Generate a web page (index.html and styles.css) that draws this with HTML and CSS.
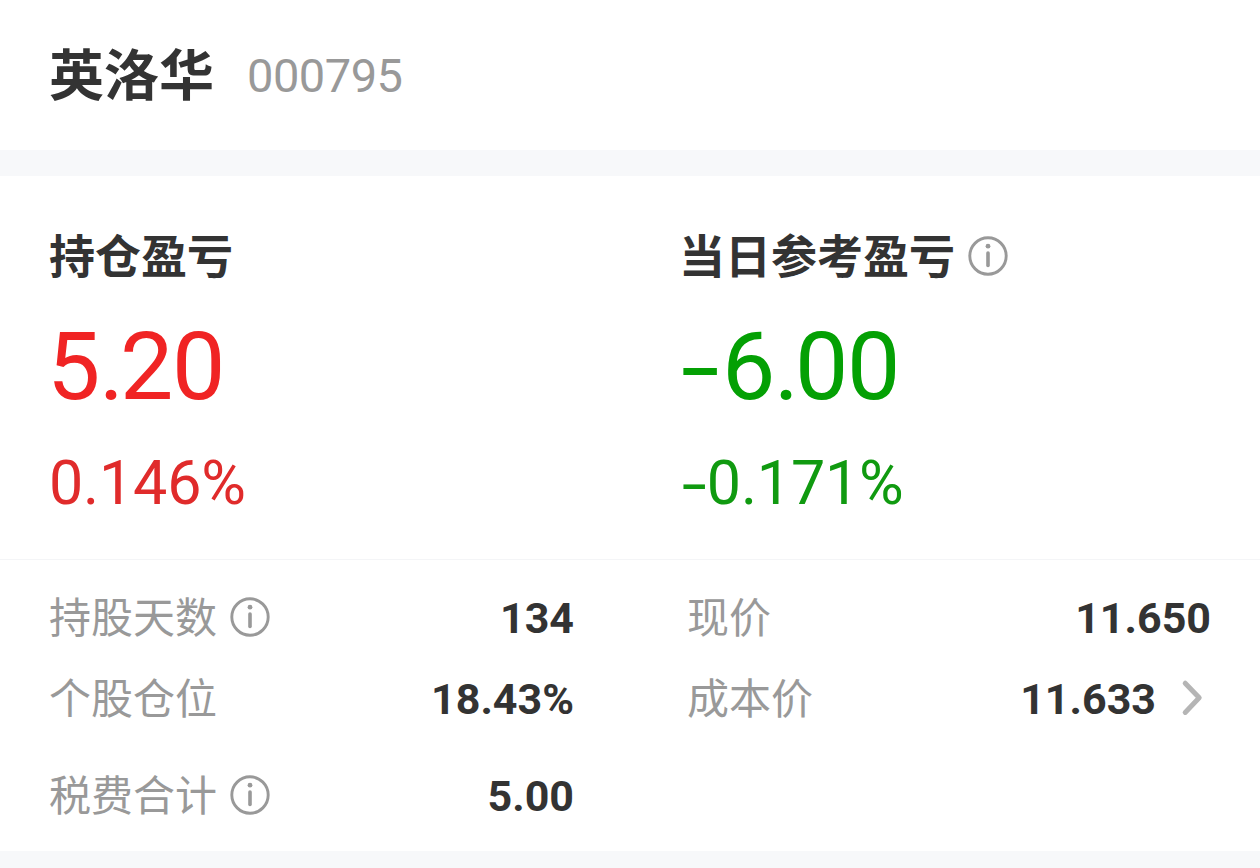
FILE: index.html
```html
<!DOCTYPE html>
<html lang="zh-CN">
<head>
<meta charset="UTF-8">
<title>英洛华 000795</title>
<link rel="stylesheet" href="styles.css">
</head>
<body>
<header class="stock"><h1 class="stock-name">英洛华</h1><span class="stock-code">000795</span></header>
<main class="card">
<section class="summary">
<div class="profit up">
<h2 class="profit-title"><span class="title-text">持仓盈亏</span></h2>
<div class="amount">5<span class="point">.</span>20</div>
<div class="percent">0.146%</div>
</div>
<div class="profit down">
<h2 class="profit-title"><span class="title-text">当日参考盈亏</span><svg class="info" viewBox="0 0 40 40"><circle cx="20" cy="20" r="18.2"/><path d="M20 17v12.5"/><circle class="dot" cx="20" cy="10.2" r="2.4"/></svg></h2>
<div class="amount"><span class="minus">–</span>6<span class="point">.</span>00</div>
<div class="percent"><span class="minus">–</span>0.171%</div>
</div>
</section>
<section class="details">
<div class="row"><span class="label">持股天数</span><svg class="info" viewBox="0 0 40 40"><circle cx="20" cy="20" r="18.2"/><path d="M20 17v12.5"/><circle class="dot" cx="20" cy="10.2" r="2.4"/></svg><span class="value">134</span></div>
<div class="row right"><span class="label">现价</span><span class="value">11.650</span></div>
<div class="row"><span class="label">个股仓位</span><span class="value">18.43%</span></div>
<div class="row right"><span class="label">成本价</span><span class="value">11.633</span><svg class="chevron" viewBox="0 0 24 38"><path d="M5.2 4.2L19.2 18.8L5.2 33.4"/></svg></div>
<div class="row"><span class="label">税费合计</span><svg class="info" viewBox="0 0 40 40"><circle cx="20" cy="20" r="18.2"/><path d="M20 17v12.5"/><circle class="dot" cx="20" cy="10.2" r="2.4"/></svg><span class="value">5.00</span></div>
</section>
</main>
</body>
</html>
```
FILE: styles.css
```css
* { box-sizing: border-box; }
body { margin: 0; height: 868px; overflow: hidden; background: #f7f8fa; color: #333; font-family: "Noto Sans CJK SC", sans-serif; }
h1, h2 { margin: 0; }
.stock { height: 150px; padding-left: 49px; display: flex; align-items: center; background: #fff; }
.stock-name { font-size: 55px; line-height: 80px; font-weight: 700; width: 198px; padding-bottom: 8px; }
.stock-code, .amount, .percent, .value { font-family: Roboto, "Noto Sans CJK SC", sans-serif; }
.stock-code { font-size: 47px; line-height: 80px; letter-spacing: -0.5px; color: #999; padding-top: 2px; }
.card { margin-top: 26px; height: 675px; background: #fff; }
.summary { height: 384px; display: grid; grid-template-columns: 631px 1fr; border-bottom: 1px solid #f4f5f7; padding: 50px 0 0 49px; }
.profit-title { height: 60px; display: flex; align-items: center; gap: 13px; font-size: 46px; line-height: 60px; }
.title-text { padding-bottom: 7px; }
.down .title-text { margin-left: -1px; }
.amount { height: 130px; margin: 16px 0 0 -2px; font-size: 95px; line-height: 130px; letter-spacing: -1.4px; white-space: nowrap; }
.amount .point { letter-spacing: -4px; }
.percent { height: 80px; margin-top: 11px; font-size: 61px; line-height: 80px; letter-spacing: -0.2px; white-space: nowrap; }
.minus { display: inline-block; transform: translateY(0.06em) scaleX(0.72); transform-origin: left center; }
.amount .minus { margin-right: -17px; }
.percent .minus { margin-right: -13px; }
.up .amount { color: #f02424; }
.up .percent { color: #e02b2b; }
.down .amount { color: #04a004; }
.down .percent { color: #109a10; }
.info { width: 40px; height: 40px; flex: none; fill: none; stroke: #999; stroke-width: 2.9; stroke-linecap: round; }
.info path { stroke-width: 3.6; }
.info .dot { fill: #999; stroke: none; }
.details { display: grid; grid-template-columns: 574px 523px; column-gap: 113px; grid-template-rows: 80px 82px 112px; padding-top: 17px; }
.row { display: flex; align-items: center; padding-left: 49px; }
.row.right { padding-left: 0; margin-right: -1px; }
.label { font-size: 42px; line-height: 60px; color: #999; margin-right: 13px; padding-bottom: 5px; }
.value { margin-left: auto; font-size: 43px; line-height: 60px; font-weight: 700; padding-top: 2px; }
.chevron { width: 24px; height: 38px; margin: 0 7px 0 24px; fill: none; stroke: #b5b5b5; stroke-width: 5; stroke-linecap: round; stroke-linejoin: round; }
```
